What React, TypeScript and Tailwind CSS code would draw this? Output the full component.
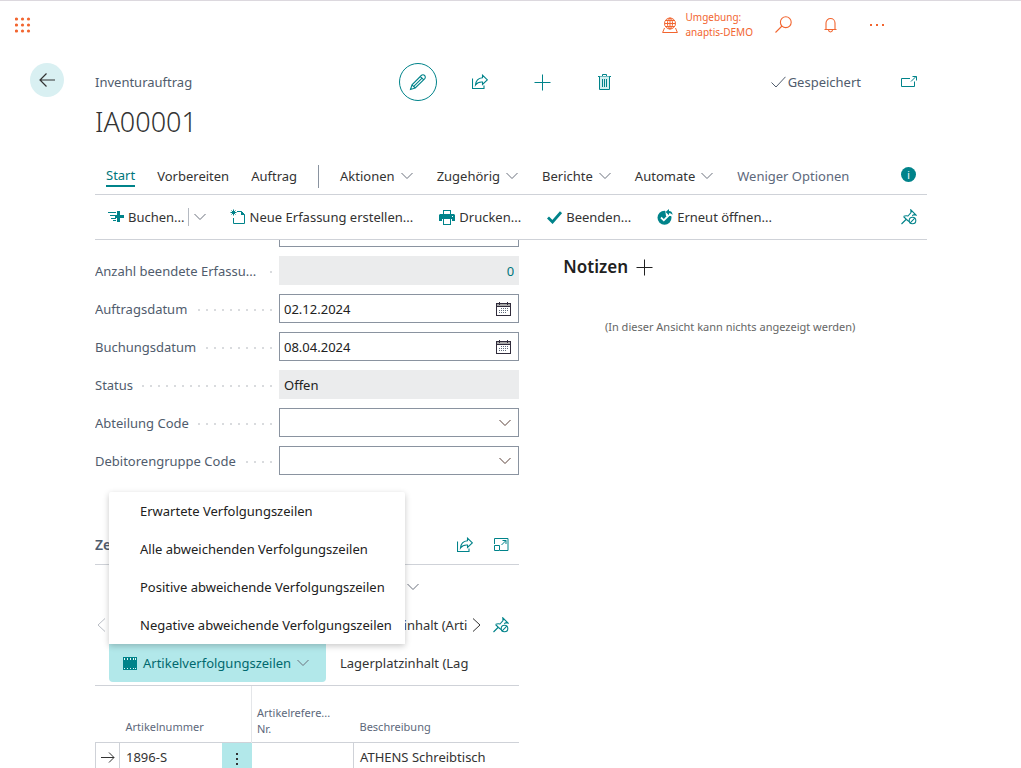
import React, { useState } from 'react';
import clsx from 'clsx';

type IconProps = { className?: string };

const line = { fill: 'none', stroke: 'currentColor', strokeWidth: 1 };

function Chevron({ className = 'text-[#6a717c]' }: IconProps) {
  return (
    <svg width="12" height="8" viewBox="0 0 12 8" className={clsx('shrink-0', className)} {...line}>
      <path d="M.5 1 6 6.500 11.500 1" />
    </svg>
  );
}

function PencilIcon() {
  return (
    <svg width="18" height="18" viewBox="0 0 18 18" {...line} strokeWidth={1.1}>
      <path d="M1.500 16.500 3 11.800 12.300 2.500a2.300 2.300 0 0 1 3.300 0 2.300 2.300 0 0 1 0 3.300L6.200 15zM3 11.800 6.200 15M11.300 3.500l3.200 3.200M5 13.200l7.600-7.600" />
    </svg>
  );
}

function ShareIcon() {
  return (
    <svg width="16" height="16" viewBox="0 0 16 16" {...line} strokeWidth={1.1}>
      <path d="M.5 4.500v10h11.500v-3" />
      <path d="M10.500 1.200 15.300 5.800l-4.800 4.700V8C7.500 7.700 5.300 8.500 3.500 11 3.800 7 6.300 4 10.500 3.700z" />
    </svg>
  );
}

function PlusIcon() {
  return (
    <svg width="17" height="17" viewBox="0 0 17 17" {...line}>
      <path d="M8.500 0.500v16M.5 8.500h16" />
    </svg>
  );
}

function TrashIcon() {
  return (
    <svg width="13" height="16" viewBox="0 0 13 16" {...line}>
      <path d="M0 2.500h13M4.500 2.500v-2h4v2" />
      <path d="M1.500 2.500v13h10v-13" fill="#d5eff0" />
      <path d="M4.500 5v8M6.500 5v8M8.500 5v8" />
    </svg>
  );
}

function PopOutIcon() {
  return (
    <svg width="16" height="12" viewBox="0 0 16 12" {...line}>
      <path d="M9 2.500H.5v8h13V5.500M10 5.500l5-5M11.500.5h4v4" />
    </svg>
  );
}

function ExpandIcon() {
  return (
    <svg width="15" height="13" viewBox="0 0 15 13" {...line}>
      <path d="M.5 6V.5h13.500v12H6M.5 7.500h5v5h-5zM7.500 7 12 2.500M8.500 2.500H12V6" />
    </svg>
  );
}

function UnpinIcon() {
  return (
    <svg width="16" height="16" viewBox="0 0 16 16" {...line} strokeWidth={1.1}>
      <path d="M.5 15 5 10.500M2.500 7.500l3 3 2.500 2M2.500 7.500C4 6.600 5.500 6.600 7 7l3-3.500L9.800.8 15 6l-2.700-.2-1 1" />
      <circle cx="11.500" cy="11.500" r="3.300" />
      <path d="m9.200 13.800 4.600-4.600" />
    </svg>
  );
}

function EnvironmentIcon() {
  return (
    <svg width="16" height="16" viewBox="0 0 16 16" {...line}>
      <circle cx="8" cy="6.500" r="5.500" />
      <ellipse cx="8" cy="6.500" rx="2.500" ry="5.500" />
      <path d="M2.500 6.500h11M3.500 3.500h9M3.500 9.500h9M8 1v11M2.500 11 .6 15.500h14.800L13.500 11" />
    </svg>
  );
}

function SearchIcon() {
  return (
    <svg width="17" height="17" viewBox="0 0 17 17" {...line} strokeWidth={1.1}>
      <circle cx="10.800" cy="6.200" r="5.400" />
      <path d="M7 10 .5 16.500" />
    </svg>
  );
}

function BellIcon() {
  return (
    <svg width="13" height="16" viewBox="0 0 13 16" {...line} strokeWidth={1.1}>
      <path d="M2 12.500V6a4.500 4.500 0 0 1 9 0v6.500M.5 12.500h12M4.500 13c.3 2.600 3.700 2.600 4 0" />
    </svg>
  );
}

function PostIcon() {
  return (
    <svg width="16" height="12" viewBox="0 0 16 12" fill="currentColor">
      <path d="M0 1h8v1H0zM2 4h5v1H2zM3 7h5v1H3zM5 9h3v1H5zM9 0h3v4h4v3h-4v4H9V7H7V4h2z" />
    </svg>
  );
}

function NewDocIcon() {
  return (
    <svg width="15" height="16" viewBox="0 0 15 16" {...line}>
      <path d="M7 2.500h4.500l3 3v9h-11V9" />
      <path d="M11 2v4h4z" fill="currentColor" stroke="none" />
      <path d="M3.500.5v6M.5 3.500h6M1.500 1.500l4 4M5.500 1.500l-4 4" />
    </svg>
  );
}

function PrintIcon() {
  return (
    <svg width="16" height="15" viewBox="0 0 16 15">
      <path fill="currentColor" d="M1 4h14l1 1v6h-3V9H3v2H0V5zM4 0h8v4H4z" />
      <path fill="#fff" d="M5 1h6v3H5zM5 10h6v4H5z" />
      <path fill="currentColor" d="M4 9h1v5h6V9h1v6H4z" />
      <path fill="#fff" d="M13 6h1v1h-1z" />
    </svg>
  );
}

function CheckIcon() {
  return (
    <svg width="15" height="13" viewBox="0 0 15 13">
      <path d="M1 6.500 5.500 11 14 1.200" fill="none" stroke="currentColor" strokeWidth="2.800" />
    </svg>
  );
}

function ReopenIcon() {
  return (
    <svg width="16" height="16" viewBox="0 0 16 16">
      <circle cx="7.500" cy="8.800" r="7" fill="currentColor" />
      <path d="M8 0h8v7H9z" fill="#fff" />
      <path d="m4 8.500 2.800 2.800L12 6" fill="none" stroke="#fff" strokeWidth="1.800" />
      <path d="M12 0v2c2.400 0 3.500 1.300 3.500 4-.8-1.300-1.800-1.800-3.500-1.800v2L8.600 3z" fill="currentColor" />
    </svg>
  );
}

function CalendarIcon() {
  return (
    <svg width="15" height="14" viewBox="0 0 15 14" fill="#302b3b" shapeRendering="crispEdges">
      <path d="M1 2h13v3H1z" fill="#a8a8a8" />
      <path d="M0 1h15v13H0zM1 5v8h13V5zM1 2v2h13V2z" fillRule="evenodd" />
      <path d="M3 0h1v3H3zM11 0h1v3h-1z" />
      <path
        d="M5 6h1v1H5zM7 6h1v1H7zM9 6h1v1H9zM11 6h1v1h-1zM3 8h1v1H3zM5 8h1v1H5zM7 8h1v1H7zM9 8h1v1H9zM11 8h1v1h-1zM3 10h1v1H3zM5 10h1v1H5zM7 10h1v1H7zM9 10h1v1H9z"
        fill="#5f6b7c"
      />
    </svg>
  );
}

function TrackingIcon() {
  return (
    <svg width="14" height="13" viewBox="0 0 14 13" shapeRendering="crispEdges">
      <path fill="currentColor" d="M0 0h14v13H0z" />
      <path fill="#e3f8f8" d="M1 1h1v2H1zM4 1h1v2H4zM7 1h1v2H7zM10 1h1v2h-1zM12 1h1v2h-1zM1 11h1v1H1zM4 11h1v1H4zM7 11h1v1H7zM10 11h1v1h-1zM12 11h1v1h-1z" />
    </svg>
  );
}

function BackIcon() {
  return (
    <svg width="16" height="14" viewBox="0 0 16 14" {...line} strokeWidth={1.2}>
      <path d="M16 7H1M7.500.5 1 7l6.500 6.500" />
    </svg>
  );
}

function RowArrowIcon() {
  return (
    <svg width="14" height="11" viewBox="0 0 14 11" {...line}>
      <path d="M0 5.500h13M8 .5l5 5-5 5" />
    </svg>
  );
}

const MENU_TABS = ['Aktionen', 'Zugehörig', 'Berichte', 'Automate'];

const TRACKING_MENU = [
  'Erwartete Verfolgungszeilen',
  'Alle abweichenden Verfolgungszeilen',
  'Positive abweichende Verfolgungszeilen',
  'Negative abweichende Verfolgungszeilen',
];

type FieldDef = {
  id: string;
  label: string;
  value: string;
  kind: 'number' | 'readonly' | 'date' | 'lookup';
};

const FIELDS: FieldDef[] = [
  { id: 'finished', label: 'Anzahl beendete Erfassu...', value: '0', kind: 'number' },
  { id: 'orderDate', label: 'Auftragsdatum', value: '02.12.2024', kind: 'date' },
  { id: 'postingDate', label: 'Buchungsdatum', value: '08.04.2024', kind: 'date' },
  { id: 'status', label: 'Status', value: 'Offen', kind: 'readonly' },
  { id: 'department', label: 'Abteilung Code', value: '', kind: 'lookup' },
  { id: 'customerGroup', label: 'Debitorengruppe Code', value: '', kind: 'lookup' },
];

function Field({ field }: { field: FieldDef }) {
  const [value, setValue] = useState(field.value);
  const locked = field.kind === 'number' || field.kind === 'readonly';

  return (
    <div className="flex h-[29px] items-center">
      <div className="flex w-[184px] shrink-0 items-center gap-2 pr-[7px]">
        <label htmlFor={field.id} className="whitespace-nowrap text-[#505c6d]">
          {field.label}
        </label>
        <span className="mt-[2px] h-[2px] flex-1 bg-[repeating-linear-gradient(to_left,#d9dbde_0_2px,transparent_2px_8px)]" />
      </div>
      <div
        className={clsx(
          'relative flex h-full min-w-0 flex-1 items-center',
          locked ? 'bg-[#ebeced]' : 'border border-[#8a93a0] bg-white'
        )}
      >
        {field.kind === 'lookup' ? (
          <>
            <select
              id={field.id}
              value={value}
              onChange={(e) => setValue(e.target.value)}
              className="h-full w-full appearance-none bg-transparent px-1 outline-none"
            >
              <option value=""></option>
            </select>
            <Chevron className="pointer-events-none absolute right-[7px] text-[#5a4038]" />
          </>
        ) : (
          <input
            id={field.id}
            value={value}
            readOnly={locked}
            onChange={(e) => setValue(e.target.value)}
            className={clsx(
              'h-full min-w-0 flex-1 bg-transparent outline-none',
              locked ? 'px-[5px]' : 'px-1',
              field.kind === 'number' ? 'text-right text-[#00767c]' : 'text-[#212121]'
            )}
          />
        )}
        {field.kind === 'date' && (
          <button type="button" aria-label="Kalender" className="pr-[7px]">
            <CalendarIcon />
          </button>
        )}
      </div>
    </div>
  );
}

function TopBar() {
  return (
    <header className="flex h-12 shrink-0 items-center border-t border-[#dcd8de] pr-[136px] pl-[15px] text-[#f2652f]">
      <button type="button" aria-label="App-Startfeld">
        <svg width="16" height="16" viewBox="0 0 16 16" fill="currentColor">
          {[2, 8, 14].map((y) => [2, 8, 14].map((x) => <circle key={`${x}-${y}`} cx={x - 0.5} cy={y} r="1.600" />))}
        </svg>
      </button>
      <button type="button" className="ml-auto flex items-center gap-2 text-left text-[10px] leading-[15px]">
        <EnvironmentIcon />
        <span>
          Umgebung:
          <br />
          anaptis-DEMO
        </span>
      </button>
      <button type="button" aria-label="Suchen" className="ml-[22px]">
        <SearchIcon />
      </button>
      <button type="button" aria-label="Benachrichtigungen" className="ml-8">
        <BellIcon />
      </button>
      <button type="button" aria-label="Einstellungen" className="ml-8">
        <svg width="16" height="4" viewBox="0 0 16 4" fill="currentColor">
          <path d="M1 1h2v2H1zM7 1h2v2H7zM13 1h2v2h-2z" />
        </svg>
      </button>
    </header>
  );
}

function RecordHeader() {
  return (
    <div className="flex shrink-0">
      <div className="w-[95px] shrink-0 pt-[15px] pl-[30px]">
        <button
          type="button"
          aria-label="Zurück"
          className="flex size-[34px] items-center justify-center rounded-full bg-[#d9f0f2] text-[#333]"
        >
          <BackIcon />
        </button>
      </div>
      <div className="mr-[94px] min-w-0 flex-1 pt-[15px]">
        <div className="grid h-[38px] grid-cols-[1fr_auto_1fr] items-center">
          <span className="text-[#505c6d]">Inventurauftrag</span>
          <div className="flex gap-6 text-[#00838a]">
            <button
              type="button"
              aria-label="Bearbeiten"
              className="flex size-[38px] items-center justify-center rounded-full border border-[#00838a]"
            >
              <PencilIcon />
            </button>
            <button type="button" aria-label="Teilen" className="flex size-[38px] items-center justify-center">
              <ShareIcon />
            </button>
            <button type="button" aria-label="Neu" className="flex size-[38px] items-center justify-center">
              <PlusIcon />
            </button>
            <button type="button" aria-label="Löschen" className="flex size-[38px] items-center justify-center">
              <TrashIcon />
            </button>
          </div>
          <div className="flex items-center justify-end gap-10 pr-[10px]">
            <span className="flex items-center gap-[2px] text-[#505c6d]">
              <svg width="15" height="12" viewBox="0 0 15 12" {...line}>
                <path d="m.5 6.500 4.500 4.500L14.500.8" />
              </svg>
              Gespeichert
            </span>
            <button type="button" aria-label="In neuem Fenster öffnen" className="text-[#00838a]">
              <PopOutIcon />
            </button>
          </div>
        </div>
        <h1 className="text-[27px] leading-[42px] font-light text-[#333]">IA00001</h1>
      </div>
    </div>
  );
}

function ActionBar() {
  return (
    <div className="mr-[94px] ml-[95px] shrink-0 text-[#333]">
      <div className="mt-[15px] flex h-[37px] items-center border-b border-[#cfd2d8] px-[11px]">
        <button type="button" className="border-b-2 border-[#00838a] text-[#00767c]">
          Start
        </button>
        <button type="button" className="ml-[22px]">Vorbereiten</button>
        <button type="button" className="ml-[22px]">Auftrag</button>
        <span className="mr-[21px] ml-[21px] h-[23px] border-l border-[#8a93a0]" />
        <div className="flex gap-6">
          {MENU_TABS.map((tab) => (
            <button key={tab} type="button" className="flex items-center gap-[6px]">
              {tab}
              <Chevron />
            </button>
          ))}
          <button type="button" className="text-[#5d687b]">Weniger Optionen</button>
        </div>
        <button
          type="button"
          aria-label="Info"
          className="mb-[3px] ml-auto flex size-[15px] items-center justify-center rounded-full bg-[#00838a] text-[10px] leading-none text-white"
        >
          i
        </button>
      </div>

      <div className="flex h-[45px] items-center border-b border-[#cfd2d8] pr-[10px] pl-[13px]">
        <button type="button" className="flex items-center gap-1">
          <span className="text-[#00838a]"><PostIcon /></span>
          Buchen...
        </button>
        <button
          type="button"
          aria-label="Buchen Optionen"
          className="ml-[3px] flex h-[18px] items-center border-l border-[#b5bac2] pl-[5px]"
        >
          <Chevron />
        </button>
        <button type="button" className="ml-6 flex items-center gap-[5px]">
          <span className="text-[#00838a]"><NewDocIcon /></span>
          Neue Erfassung erstellen...
        </button>
        <button type="button" className="ml-[26px] flex items-center gap-1">
          <span className="text-[#00838a]"><PrintIcon /></span>
          Drucken...
        </button>
        <button type="button" className="ml-[26px] flex items-center gap-1">
          <span className="text-[#00838a]"><CheckIcon /></span>
          Beenden...
        </button>
        <button type="button" className="ml-[26px] flex items-center gap-1">
          <span className="text-[#00838a]"><ReopenIcon /></span>
          Erneut öffnen...
        </button>
        <button type="button" aria-label="Loslösen" className="ml-auto text-[#00838a]">
          <UnpinIcon />
        </button>
      </div>
    </div>
  );
}

function Lines() {
  const [menuOpen, setMenuOpen] = useState(true);

  return (
    <section className="mt-[50px]">
      <div className="flex h-10 items-center border-b border-[#cfd2d8] pr-[10px]">
        <h2 className="text-[14px] font-semibold text-[#505c6d]">Zeilen</h2>
        <div className="ml-auto flex items-center gap-[21px] text-[#00838a]">
          <button type="button" aria-label="Teilen"><ShareIcon /></button>
          <button type="button" aria-label="Fokusmodus"><ExpandIcon /></button>
        </div>
      </div>

      <div className="border-b border-[#cfd2d8] py-[3px] text-[#333]">
        <div className="flex h-[38px] items-center justify-end pr-[100px]">
          <button type="button" aria-label="Menü"><Chevron /></button>
        </div>

        <div className="flex h-[38px] items-center">
          <button type="button" aria-label="Zurückblättern" className="pl-[2px] text-[#b9bdc4]">
            <svg width="9" height="14" viewBox="0 0 9 14" {...line}><path d="M8 .5 1 7l7 6.500" /></svg>
          </button>
          <button type="button" className="ml-auto w-[129px] text-left whitespace-nowrap">Lagerplatzinhalt (Arti</button>
          <button type="button" aria-label="Weiterblättern" className="pl-1">
            <svg width="9" height="14" viewBox="0 0 9 14" {...line}><path d="m1 .5 7 6.500-7 6.500" /></svg>
          </button>
          <button type="button" aria-label="Loslösen" className="pr-[10px] pl-3 text-[#00838a]">
            <UnpinIcon />
          </button>
        </div>

        <div className="flex h-[38px] items-center">
          <div className="relative ml-[14px] h-full shrink-0">
            <button
              type="button"
              onClick={() => setMenuOpen(!menuOpen)}
              className="flex h-full w-[217px] items-center gap-[6px] rounded-b-sm bg-[#b2e8ea] pl-[14px] text-[#00686e]"
            >
              <span className="text-[#00838a]"><TrackingIcon /></span>
              Artikelverfolgungszeilen
              <Chevron />
            </button>
            {menuOpen && (
              <ul className="absolute bottom-full left-0 z-10 w-[296px] rounded-t-xs bg-white text-[#212121] shadow-[0_2px_6px_rgba(0,0,0,0.22)]">
                {TRACKING_MENU.map((item) => (
                  <li key={item}>
                    <button type="button" className="flex h-[38px] w-full items-center pl-[31px] whitespace-nowrap">
                      {item}
                    </button>
                  </li>
                ))}
              </ul>
            )}
          </div>
          <button type="button" className="ml-[14px] whitespace-nowrap">Lagerplatzinhalt (Lag</button>
        </div>
      </div>

      <table className="w-full table-fixed border-collapse text-left">
        <colgroup>
          <col className="w-[24px]" />
          <col className="w-[102px]" />
          <col className="w-[30px]" />
          <col className="w-[102px]" />
          <col />
        </colgroup>
        <thead className="text-[11px] leading-4 text-[#5d687b]">
          <tr className="h-[56px] border-b border-[#cfd2d8] align-bottom">
            <td />
            <th colSpan={2} className="border-r border-[#e4e6e9] pb-[7px] pl-[6px] font-normal">Artikelnummer</th>
            <th className="pb-[5px] pl-[5px] font-normal whitespace-nowrap">
              Artikelrefere...
              <br />
              Nr.
            </th>
            <th className="pb-[7px] pl-[6px] font-normal">Beschreibung</th>
          </tr>
        </thead>
        <tbody className="text-[#333]">
          <tr className="h-[30px]">
            <td className="border-x border-[#cfd2d8] pl-[5px]"><RowArrowIcon /></td>
            <td className="pl-[6px]">1896-S</td>
            <td className="bg-[#b2e8ea] text-center">
              <button type="button" aria-label="Weitere Optionen" className="align-middle">
                <svg width="4" height="16" viewBox="0 0 4 16" fill="#333">
                  <path d="M1 2h2v2H1zM1 7h2v2H1zM1 12h2v2H1z" />
                </svg>
              </button>
            </td>
            <td className="border-r border-[#cfd2d8]" />
            <td className="pl-[6px]">ATHENS Schreibtisch</td>
          </tr>
        </tbody>
      </table>
    </section>
  );
}

function Notes() {
  return (
    <aside className="min-w-0 pt-[15px]">
      <div className="flex items-center gap-2 text-[#212121]">
        <h2 className="text-[17px] leading-6 font-semibold">Notizen</h2>
        <button type="button" aria-label="Notiz hinzufügen">
          <PlusIcon />
        </button>
      </div>
      <p className="mt-10 pr-[30px] text-center text-[11px] leading-4 text-[#666]">
        (In dieser Ansicht kann nichts angezeigt werden)
      </p>
    </aside>
  );
}

export default function App() {
  return (
    <div className="flex h-screen flex-col overflow-hidden bg-white font-['Noto_Sans','Open_Sans',sans-serif] text-[13px] leading-5">
      <TopBar />
      <RecordHeader />
      <ActionBar />
      <main className="mr-[94px] ml-[95px] grid min-h-0 flex-1 grid-cols-[minmax(0,7fr)_minmax(0,6fr)] gap-11 overflow-hidden">
        <div>
          <div className="-mt-[22px] flex flex-col gap-[9px]">
            {/* scrolled out, only its lower edge shows below the action bar */}
            <div className="ml-[184px] h-[29px] border border-[#8a93a0]" />
            {FIELDS.map((field) => (
              <Field key={field.id} field={field} />
            ))}
          </div>
          <Lines />
        </div>
        <Notes />
      </main>
    </div>
  );
}
